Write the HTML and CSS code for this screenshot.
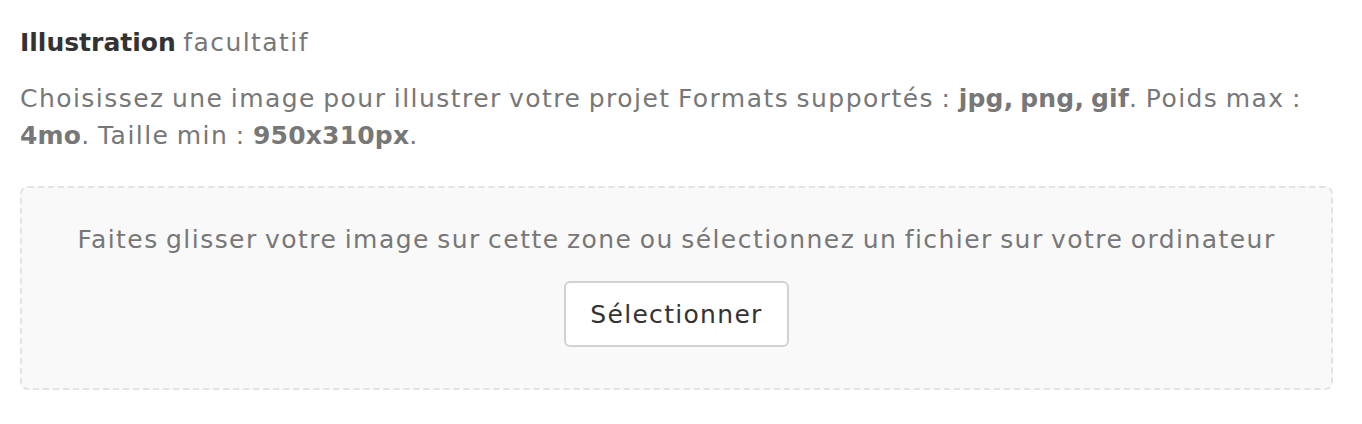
FILE: index.html
```html
<!DOCTYPE html>
<html lang="fr">
<head>
<meta charset="utf-8">
<link rel="stylesheet" href="styles.css">
</head>
<body>
<div class="field">
  <div class="label"><strong>Illustration</strong> <span class="opt">facultatif</span></div>
  <p class="help">Choisissez une image pour illustrer votre projet Formats supportés : <b>jpg, png, gif</b>. Poids max : <b>4mo</b>. Taille min : <b>950x310px</b>.</p>
  <div class="drop">
    <p class="drop-text">Faites glisser votre image sur cette zone ou sélectionnez un fichier sur votre ordinateur</p>
    <button class="btn" type="button">Sélectionner</button>
  </div>
</div>
</body>
</html>
```
FILE: styles.css
```css
html, body {
  margin: 0;
  padding: 0;
  background: #fff;
}
body {
  font-family: "DejaVu Sans", sans-serif;
  font-size: 25px;
  letter-spacing: 1.45px;
  word-spacing: -2px;
  color: #777;
}
.field {
  padding: 24px 29px 0 20px;
}
.label {
  line-height: 37px;
  color: #777;
}
.label strong {
  color: #333;
  font-weight: 700;
  letter-spacing: 0;
}
.help {
  margin: 19px 0 0;
  line-height: 37px;
}
.help b {
  font-weight: 700;
  letter-spacing: 0.2px;
}
.drop {
  margin-top: 32px;
  background: #f9f9f9;
  border: 2px dashed #e3e3e3;
  border-radius: 8px;
  box-sizing: border-box;
  height: 204px;
  display: flex;
  flex-direction: column;
  align-items: center;
  padding-top: 33px;
}
.drop-text {
  margin: 0;
  line-height: 37px;
  color: #777;
}
.btn {
  margin-top: 23px;
  width: 225px;
  height: 66px;
  background: #fff;
  border: 2px solid #d2d2d2;
  border-radius: 6px;
  font-family: inherit;
  font-size: 25px;
  letter-spacing: 1.3px;
  color: #333;
}
```
